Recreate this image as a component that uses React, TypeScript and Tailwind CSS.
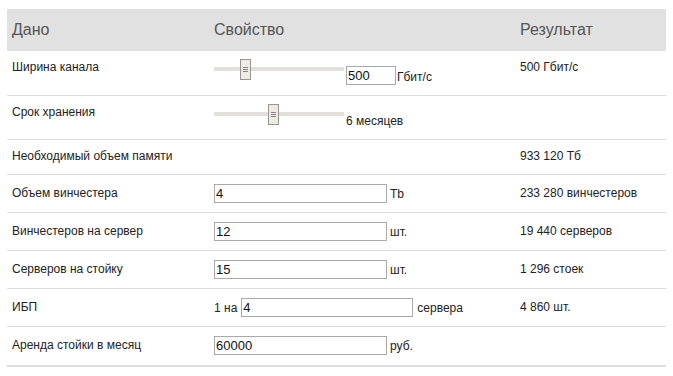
import React from "react";

function Slider({ left }: { left: number }) {
  return (
    <div className="relative w-[130px] h-[21px] shrink-0">
      <div className="absolute left-0 right-0 top-[8px] h-[4px] bg-[#e3dfda]" />
      <div
        className="absolute top-0 w-[11px] h-[21px] bg-[#eeebe7] border border-[#999591] flex flex-col items-center justify-center gap-[1px]"
        style={{ left }}
      >
        <div className="w-[5px] h-[1px] bg-[#8a8580]" />
        <div className="w-[5px] h-[1px] bg-[#8a8580]" />
        <div className="w-[5px] h-[1px] bg-[#8a8580]" />
      </div>
    </div>
  );
}

function Field({ value, w = 173 }: { value: string; w?: number }) {
  return (
    <input
      readOnly
      value={value}
      style={{ width: w }}
      className="h-[19px] border border-[#a9a9a9] px-[1px] text-[13px] leading-[17px] text-[#111] bg-white outline-none"
    />
  );
}

export default function App() {
  const rowCls =
    "grid grid-cols-[202px_306px_151px] border-b border-[#dddddd] text-[12px] leading-[15px] text-[#222]";
  return (
    <div
      className="w-[673px] h-[376px] bg-white pt-[9px] pl-[7px]"
      style={{ fontFamily: '"Liberation Sans", Arial, sans-serif' }}
    >
      <div className="w-[659px]">
        <div className="grid grid-cols-[202px_306px_151px] h-[42px] bg-[#e1e1e1] items-center text-[16px] text-[#555]">
          <div className="pl-[5px]">Дано</div>
          <div className="pl-[5px]">Свойство</div>
          <div className="pl-[5px]">Результат</div>
        </div>

        <div className={rowCls + " h-[45px]"}>
          <div className="pl-[5px] pt-[9px]">Ширина канала</div>
          <div className="pl-[5px] pt-[8px] flex items-start">
            <Slider left={26} />
            <div className="ml-[2px] mt-[7px] flex items-start">
              <Field value="500" w={50} />
              <span className="ml-[1px] mt-[4px]">Гбит/с</span>
            </div>
          </div>
          <div className="pl-[5px] pt-[9px]">500 Гбит/с</div>
        </div>

        <div className={rowCls + " h-[44px]"}>
          <div className="pl-[5px] pt-[9px]">Срок хранения</div>
          <div className="pl-[5px] pt-[8px] flex items-start">
            <Slider left={54} />
            <span className="ml-[2px] mt-[10px]">6 месяцев</span>
          </div>
          <div className="pl-[5px] pt-[9px]"></div>
        </div>

        <div className={rowCls + " h-[35px]"}>
          <div className="pl-[5px] pt-[9px]">Необходимый объем памяти</div>
          <div />
          <div className="pl-[5px] pt-[9px]">933 120 Тб</div>
        </div>

        {[
          ["Объем винчестера", "4", "Tb", "233 280 винчестеров"],
          ["Винчестеров на сервер", "12", "шт.", "19 440 серверов"],
          ["Серверов на стойку", "15", "шт.", "1 296 стоек"],
        ].map(([label, v, unit, res]) => (
          <div key={label} className={rowCls + " h-[38px]"}>
            <div className="pl-[5px] pt-[11px]">{label}</div>
            <div className="pl-[5px] pt-[9px] flex items-start">
              <Field value={v} />
              <span className="ml-[3px] mt-[3px]">{unit}</span>
            </div>
            <div className="pl-[5px] pt-[11px]">{res}</div>
          </div>
        ))}

        <div className={rowCls + " h-[38px]"}>
          <div className="pl-[5px] pt-[11px]">ИБП</div>
          <div className="pl-[5px] pt-[9px] flex items-start">
            <span className="mr-[4px] mt-[3px]">1 на</span>
            <Field value="4" w={172} />
            <span className="ml-[4px] mt-[3px]">сервера</span>
          </div>
          <div className="pl-[5px] pt-[11px]">4 860 шт.</div>
        </div>

        <div className="grid grid-cols-[202px_306px_151px] h-[40px] border-b-[2px] border-[#dddddd] text-[12px] leading-[15px] text-[#222]">
          <div className="pl-[5px] pt-[11px]">Аренда стойки в месяц</div>
          <div className="pl-[5px] pt-[9px] flex items-start">
            <Field value="60000" />
            <span className="ml-[3px] mt-[3px]">руб.</span>
          </div>
          <div />
        </div>
      </div>
    </div>
  );
}
